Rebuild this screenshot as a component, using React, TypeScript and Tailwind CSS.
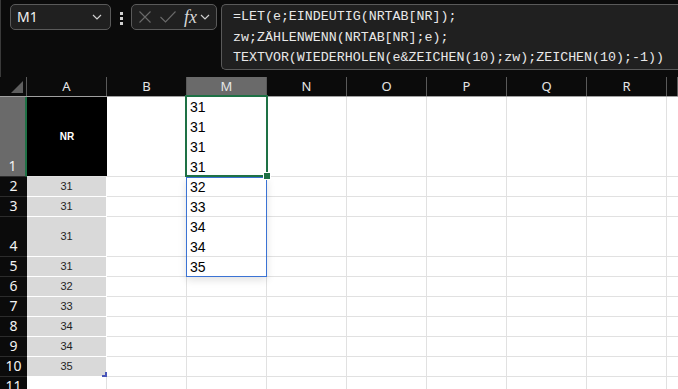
import React from "react";

const COLS = ["A", "B", "M", "N", "O", "P", "Q", "R", ""];
const ROW_H = [80, 20, 20, 40, 20, 20, 20, 20, 20, 20, 20];
const A_VALS = ["NR", "31", "31", "31", "31", "32", "33", "34", "34", "35", ""];
const M_VALS: string[][] = [["31", "31", "31", "31"], ["32"], ["33"], ["34", "34"], ["35"]];

function Chevron({ className }: { className?: string }) {
  return (
    <svg width="10" height="6" viewBox="0 0 10 6" className={className}>
      <path d="M1 1 L5 5 L9 1" fill="none" stroke="#d0d0d0" strokeWidth="1.2" />
    </svg>
  );
}

export default function App() {
  const ui = { fontFamily: '"Noto Sans", "Open Sans", sans-serif' };
  return (
    <div className="w-[678px] h-[389px] overflow-hidden bg-[#0b0b0b] flex flex-col" style={ui}>
      {/* formula bar */}
      <div className="h-[77px] shrink-0 flex items-start pt-[4px] border-l border-[#3a3a3a]">
        <div className="ml-[9px] w-[101px] h-[26px] rounded-[5px] border border-[#5a5a5a] bg-[#202020] flex items-center justify-between pl-[6px] pr-[8px]">
          <span className="text-[14px] text-[#f2f2f2] leading-none">M1</span>
          <Chevron />
        </div>
        <div className="ml-[9px] mt-[8px] flex flex-col gap-[2px]">
          <div className="w-[3px] h-[3px] bg-[#cfcfcf]" />
          <div className="w-[3px] h-[3px] bg-[#cfcfcf]" />
          <div className="w-[3px] h-[3px] bg-[#cfcfcf]" />
        </div>
        <div className="ml-[8px] w-[86px] h-[26px] rounded-[5px] border border-[#5a5a5a] bg-[#202020] flex items-center pl-[6px]">
          <svg width="14" height="14" viewBox="0 0 14 14">
            <path d="M1.5 1.5 L12.5 12.5 M12.5 1.5 L1.5 12.5" stroke="#6a6a6a" strokeWidth="1.1" />
          </svg>
          <svg width="18" height="14" viewBox="0 0 18 14" className="ml-[7px]">
            <path d="M1.5 7 L6.5 12 L16.5 1.5" fill="none" stroke="#6a6a6a" strokeWidth="1.1" />
          </svg>
          <span
            className="ml-[7px] text-[18px] italic text-[#d8d8d8] leading-none"
            style={{ fontFamily: '"Liberation Serif", "DejaVu Serif", serif' }}
          >
            fx
          </span>
          <Chevron className="ml-[3px]" />
        </div>
        <div
          className="ml-[4px] flex-1 h-[66px] rounded-l-[5px] border border-r-0 border-[#5a5a5a] bg-[#202020] pl-[11px] pt-[2px] text-[13.3px] leading-[20.5px] text-[#e8e8e8] whitespace-nowrap"
          style={{ fontFamily: '"Liberation Mono", "DejaVu Sans Mono", monospace' }}
        >
          <div>=LET(e;EINDEUTIG(NRTAB[NR]);</div>
          <div>zw;ZÄHLENWENN(NRTAB[NR];e);</div>
          <div>TEXTVOR(WIEDERHOLEN(e&amp;ZEICHEN(10);zw);ZEICHEN(10);-1))</div>
        </div>
      </div>

      {/* column headers */}
      <div className="flex h-[20px] shrink-0 border-b border-[#a0a0a0]">
        <div className="w-[27px] h-full border-r border-[#5a5a5a] flex items-end justify-end pr-[3px] pb-[3px]">
          <svg width="12" height="12" viewBox="0 0 12 12">
            <path d="M12 0 L12 12 L0 12 Z" fill="#5f5f5f" />
          </svg>
        </div>
        {COLS.map((c, i) => (
          <div
            key={i}
            className={
              "h-full flex items-center justify-center text-[13px] text-[#e6e6e6] border-r border-[#5a5a5a] " +
              (i === 8 ? "flex-1 " : "w-[80px] shrink-0 ") +
              (c === "M" ? "bg-[#6a6a6a]" : "")
            }
          >
            {c}
          </div>
        ))}
      </div>

      {/* body */}
      <div className="relative shrink-0">
        {ROW_H.map((h, r) => (
          <div key={r} className="flex shrink-0" style={{ height: h }}>
            <div
              className={
                "w-[27px] shrink-0 h-full flex items-end justify-center pb-[1px] text-[14px] leading-[18px] text-[#f2f2f2] border-b border-[#2c2c2c] " +
                (r === 0 ? "bg-[#6a6a6a] border-r-2 border-r-[#1e7145]" : "bg-[#0b0b0b]")
              }
            >
              {r + 1}
            </div>
            {/* A */}
            <div
              className={
                "w-[80px] shrink-0 h-full flex items-center justify-center border-b " +
                (r === 0
                  ? "bg-black border-[#e1e1e1] text-white font-bold text-[10px]"
                  : r <= 9
                  ? "bg-[#d9d9d9] border-white border-r text-[#1f1f1f] text-[11px]"
                  : "bg-white border-[#e1e1e1] border-r")
              }
              style={{ fontFamily: '"Liberation Sans", Arial, sans-serif' }}
            >
              {A_VALS[r]}
            </div>
            {/* B */}
            <div className="w-[80px] shrink-0 h-full bg-white border-r border-b border-[#e1e1e1]" />
            {/* M */}
            <div
              className="w-[80px] shrink-0 h-full bg-white border-r border-b border-[#e1e1e1] pl-[3px] flex flex-col text-[14px] leading-[20px] text-black"
              style={{ fontFamily: '"Liberation Sans", Arial, sans-serif' }}
            >
              {(M_VALS[r] || []).map((v, k) => (
                <div key={k}>{v}</div>
              ))}
            </div>
            {[0, 1, 2, 3, 4].map((k) => (
              <div key={k} className="w-[80px] shrink-0 h-full bg-white border-r border-b border-[#e1e1e1]" />
            ))}
            <div className="flex-1 h-full bg-white border-b border-[#e1e1e1]" />
          </div>
        ))}

        {/* spill range border */}
        <div className="absolute left-[186px] top-[80px] w-[81px] h-[100px] border border-[#3b73d4] shadow-[0_3px_8px_rgba(0,0,0,0.12)]" />
        {/* active cell */}
        <div className="absolute left-[185px] top-[-2px] w-[83px] h-[82px] border-2 border-[#1e7145]" />
        <div className="absolute left-[263px] top-[75px] w-[8px] h-[8px] bg-[#1e7145] border border-white" />
        {/* table resize handle */}
        <svg className="absolute left-[102px] top-[275px]" width="5" height="5" viewBox="0 0 5 5">
          <path d="M5 0 L5 5 L0 5 L0 3 L3 3 L3 0 Z" fill="#4a56b8" />
        </svg>
      </div>
    </div>
  );
}
